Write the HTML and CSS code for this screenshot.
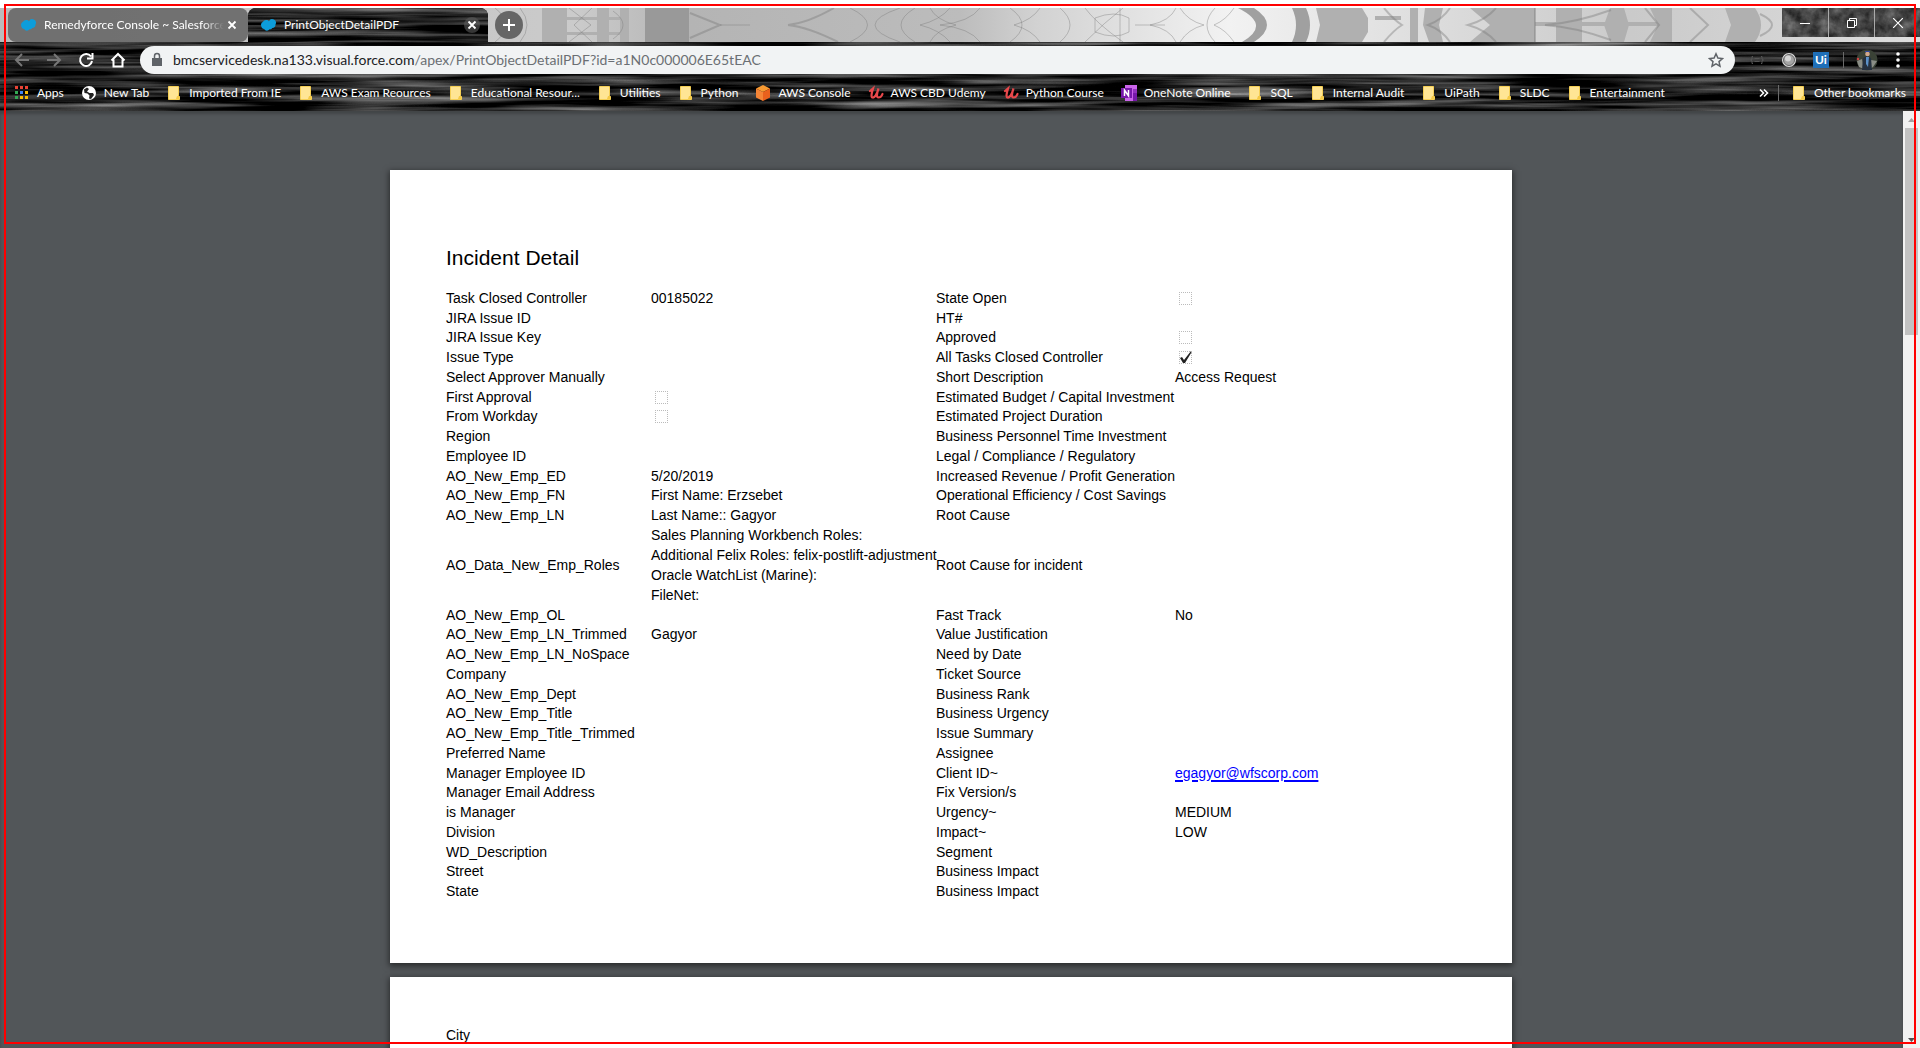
FILE: index.html
```html
<!DOCTYPE html>
<html lang="en">
<head>
<meta charset="utf-8">
<title>PrintObjectDetailPDF</title>
<link rel="stylesheet" href="styles.css">
</head>
<body>
<svg class="defs" width="0" height="0" aria-hidden="true">
  <defs>
    <symbol id="cloud" viewBox="0 0 16 16"><path fill="#0d9dda" d="M1 8a3.500 3.500 0 0 1 2-3.300A3.500 3.500 0 0 1 6.600 3c1 0 1.800.5 2.400 1.200A3.600 3.600 0 0 1 15.500 7.500 3.200 3.200 0 0 1 12.300 11c-.5 1-1.500 1.500-2.800 1.300A3 3 0 0 1 4.200 12C2.500 12 1.300 10.800 1 8z"/></symbol>
    <symbol id="folder" viewBox="0 0 16 16"><path fill="#ffe594" stroke="#f5cf55" d="M2.500 1.500h10v9l1 1v3h-11z"/><path fill="#f5c945" d="M11 11h2v3h-3z"/></symbol>
    <symbol id="udemy" viewBox="0 0 16 16"><path fill="none" stroke="#e8484b" stroke-width="2.200" stroke-linecap="round" d="M2 6l3-2.500C4 7 2.500 12 4.500 12.500S9 9 10.500 3.500C9 8 8 12.500 10.500 12.500S14 10.500 14.500 9"/></symbol>
    <symbol id="close" viewBox="0 0 16 16"><path stroke="currentColor" stroke-width="1.800" d="M4.500 4.500l7 7M11.500 4.500l-7 7"/></symbol>
    <filter id="wood-grain" x="0" y="0" width="100%" height="100%" color-interpolation-filters="sRGB">
      <feTurbulence type="fractalNoise" baseFrequency="0.006 0.17" numOctaves="3" seed="8"/>
      <feColorMatrix values="1 0 0 0 -.36  1 0 0 0 -.36  1 0 0 0 -.36  0 0 0 0 1"/>
    </filter>
    <filter id="stone" x="0" y="0" width="100%" height="100%" color-interpolation-filters="sRGB">
      <feTurbulence type="fractalNoise" baseFrequency="0.08" numOctaves="4" seed="3"/>
      <feColorMatrix values=".5 0 0 0 .02  .5 0 0 0 .02  .5 0 0 0 .02  0 0 0 0 1"/>
    </filter>
  </defs>
</svg>

<header class="chrome">
  <svg class="wood" aria-hidden="true"><rect width="100%" height="100%" filter="url(#wood-grain)"/></svg>
  <div class="strip">
    <svg class="forest" viewBox="0 0 1920 34" preserveAspectRatio="none" aria-hidden="true">
      <defs>
        <linearGradient id="sky"><stop offset="0" stop-color="#bbb"/><stop offset=".3" stop-color="#cbcbcb"/><stop offset=".36" stop-color="#b4b4b4"/><stop offset=".5" stop-color="#bcbcbc"/><stop offset=".54" stop-color="#d2d2d2"/><stop offset=".64" stop-color="#f2f2f2"/><stop offset=".75" stop-color="#dcdcdc"/><stop offset=".85" stop-color="#cacaca"/><stop offset="1" stop-color="#ddd"/></linearGradient>
      </defs>
      <path fill="url(#sky)" d="M0 0h1920v34H0z"/>
      <g fill="#b0b0b0">
        <path d="M542 0h25v34h-25zM597 0h12v34h-12zM620 0h9v34h-9zM567 9h60v3h-60zM567 24h60v3h-60z"/>
        <path fill="#999" d="M645 0h44v34h-44z"/>
        <path d="M1316 0h46l6 10v14l-6 10h-46l4-17zM1410 0h8v34h-8zM1375 8h26v4h-26zM1425 0h18l-4 17 4 17h-14l-6-17zM1470 0h65v34h-65l20-17zM1535 14h130v4h-130zM1556 0h26v34h-26zM1610 0h14l5 17-5 17h-14l-6-17zM1650 0h22v34h-22l8-17zM1725 0h30q12 17 0 34h-30l6-17z"/>
        <path fill="#a0a0a0" d="M1238 0h16q26 17 0 34h-12q30-17-4-34zM1292 0h14q8 17 0 34h-14q8-17 0-34z"/>
      </g>
      <g fill="none" stroke="#777" stroke-opacity=".4">
        <path d="M495 0q22 17 0 34M520 0q14 17 0 34M569 0l22 17-22 17M592 0l-18 17 18 17M613 3q20 14 0 28"/>
        <path stroke-width="2" d="M690 5l30 12-30 13M788 17q20-2 46-17M788 17q20 2 50 17"/>
        <path d="M720 17h30M850 34q35-17 0-34M900 0q-50 17 0 34M915 0q-28 17 0 34M930 0q6 12 26 17-20 5-26 17M950 0q-10 12-30 17 20 5 30 17M980 0q-10 14-40 17 30 3 40 17M1010 0q24 17 0 34M1040 0q-8 12-26 17 18 5 26 17M1060 0q20 17 0 34"/>
        <path d="M1085 0q10 14 38 34M1123 0q-18 14-38 34M1095 10q20-8 34 0v14q-14 8-34 0zM1120 0v34M1150 17q20-4 26-17M1150 17q20 4 26 17M1135 17h30M1180 0q8 13 24 17-16 4-24 17M1215 0q-16 17 0 34M1234 0q-8 12-20 17 12 5 20 17"/>
        <path stroke-width="2" d="M1384 0q10 12 18 17-8 5-18 17M1450 0q-8 12-22 17 14 5 22 17M1496 0q-10 12-28 17 18 5 28 17M1545 17q30-2 66-15M1545 17q30 2 66 15M1645 0l14 17-14 17M1690 0l18 17-18 17M1760 6q24 11 0 22M1535 0v34"/>
      </g>
    </svg>
    <nav class="tabs" aria-label="Tabs">
      <div class="tab">
        <svg class="ico"><use href="#cloud"/></svg>
        <span class="tab-title fade">Remedyforce Console ~ Salesforce</span>
        <button class="tab-close" aria-label="Close tab"><svg class="ico"><use href="#close"/></svg></button>
      </div>
      <div class="tab active">
        <svg class="wood" aria-hidden="true"><rect width="100%" height="100%" filter="url(#wood-grain)"/></svg>
        <svg class="ico"><use href="#cloud"/></svg>
        <span class="tab-title">PrintObjectDetailPDF</span>
        <button class="tab-close" aria-label="Close tab"><svg class="ico"><use href="#close"/></svg></button>
      </div>
      <button class="new-tab" aria-label="New tab"><svg width="14" height="14" viewBox="0 0 14 14"><path stroke="#fff" stroke-width="2" d="M7 1v12M1 7h12"/></svg></button>
    </nav>
    <div class="window-buttons">
      <svg class="wood" aria-hidden="true"><rect width="100%" height="100%" filter="url(#stone)"/></svg>
      <button aria-label="Minimize"><svg width="10" height="10"><path stroke="#fff" d="M0 5.500h10"/></svg></button>
      <button aria-label="Restore"><svg width="10" height="10" fill="none" stroke="#fff"><path d="M.5 2.500h7v7h-7zM2.500 2.500v-2h7v7h-2"/></svg></button>
      <button aria-label="Close"><svg width="10" height="10"><path stroke="#fff" stroke-width="1.200" d="M0 0l10 10M10 0L0 10"/></svg></button>
    </div>
  </div>

  <div class="toolbar">
    <button class="nav dim" aria-label="Back"><svg width="16" height="16" viewBox="0 0 16 16"><path d="M15 8H2M8 2L2 8l6 6"/></svg></button>
    <button class="nav dim" aria-label="Forward"><svg width="16" height="16" viewBox="0 0 16 16"><path d="M1 8h13M8 2l6 6-6 6"/></svg></button>
    <button class="nav" aria-label="Reload"><svg width="16" height="16" viewBox="0 0 16 16"><path d="M13 4.500A6 6 0 1 0 14 9M14.500 1v5.500H9"/></svg></button>
    <button class="nav" aria-label="Home"><svg width="16" height="16" viewBox="0 0 16 16"><path d="M1.500 8.500L8 2l6.500 6.500M3.500 7.500v7h9v-7"/></svg></button>
    <div class="omnibox">
      <svg width="12" height="16" viewBox="0 0 12 16"><path fill="#5f6368" d="M1 6h10v8H1z"/><path fill="none" stroke="#5f6368" stroke-width="1.500" d="M3.500 6V4a2.500 2.500 0 0 1 5 0v2"/></svg>
      <span class="url">bmcservicedesk.na133.visual.force.com<span class="path">/apex/PrintObjectDetailPDF?id=a1N0c000006E65tEAC</span></span>
      <button class="star" aria-label="Bookmark this page"><svg width="16" height="16" viewBox="0 0 16 16"><path fill="none" stroke="#5f6368" stroke-width="1.500" d="M8 1.800l1.900 4.300 4.600.4-3.500 3.100 1 4.600L8 11.800l-4 2.400 1-4.600L1.500 6.500l4.600-.4z"/></svg></button>
    </div>
    <div class="extensions">
      <button class="ext" aria-label="JSON"><svg class="ico" viewBox="0 0 16 16"><path fill="none" stroke="#555" d="M4 4.500H3v2.500L1.500 8 3 9v2.500h1M12 4.500h1v2.500l1.500 1-1.500 1v2.500h-1M5.500 6.500h5M5.500 9.500h5"/></svg></button>
      <button class="ext" aria-label="Recorder"><svg class="ico" viewBox="0 0 16 16"><circle cx="8" cy="8" r="7" fill="#ddd"/><circle cx="8" cy="8" r="5.500" fill="#a5a5a5" stroke="#666"/><circle cx="7" cy="6.500" r="3" fill="#d5d5d5"/></svg></button>
      <button class="ext" aria-label="UiPath"><span class="uipath">Ui</span></button>
      <span class="divider"></span>
      <button aria-label="Profile"><svg width="22" height="22" viewBox="0 0 22 22"><circle cx="11" cy="11" r="10.500" fill="#3a4236"/><path fill="#8a8d86" d="M1 12l5-2 2 10-5-2zM15 11l6 1-4 6-3 2z"/><path fill="#25303f" d="M7 9l4-2 4 2 1 12H6z"/><path fill="#5b90c8" d="M10 8h3l-1 10-2-3z"/><circle cx="11.500" cy="5" r="2.300" fill="#d2a98c"/><path fill="#2e48a0" d="M9 2h5v1H9z"/><circle cx="2" cy="10" r="1.200" fill="#c44"/></svg></button>
      <button class="menu" aria-label="Menu"><svg width="4" height="16" fill="#fff"><circle cx="2" cy="2" r="1.800"/><circle cx="2" cy="8" r="1.800"/><circle cx="2" cy="14" r="1.800"/></svg></button>
    </div>
  </div>

  <nav class="bookmarks" aria-label="Bookmarks">
    <a href="#"><svg class="ico" viewBox="0 0 16 16"><path fill="#ea4335" d="M1 1h3v3H1zM6 1h3v3H6zM11 1h3v3h-3z"/><path fill="#34a853" d="M1 6h3v3H1zM1 11h3v3H1z"/><path fill="#4285f4" d="M6 6h3v3H6z"/><path fill="#fbbc05" d="M11 6h3v3h-3zM6 11h3v3H6zM11 11h3v3h-3z"/></svg>Apps</a>
    <a href="#"><svg class="ico" viewBox="0 0 16 16"><circle cx="8" cy="8" r="7" fill="#fff"/><path fill="#222" d="M3 4.500l3-2 2 1.500-2 2.500 2.500 1.500H12l1 2-3 4-2-.5.500-3-2-2-3-.5z"/></svg>New Tab</a>
    <a href="#"><svg class="ico"><use href="#folder"/></svg>Imported From IE</a>
    <a href="#"><svg class="ico"><use href="#folder"/></svg>AWS Exam Reources</a>
    <a href="#"><svg class="ico"><use href="#folder"/></svg>Educational Resour...</a>
    <a href="#"><svg class="ico"><use href="#folder"/></svg>Utilities</a>
    <a href="#"><svg class="ico"><use href="#folder"/></svg>Python</a>
    <a href="#"><svg class="ico" viewBox="0 0 16 16"><path fill="#f79a32" d="M8 0l7 3.500L8 7 1 3.500z"/><path fill="#f58536" d="M1 3.500L8 7v9l-7-3.500z"/><path fill="#e9611d" d="M15 3.500L8 7v9l7-3.500z"/></svg>AWS Console</a>
    <a href="#"><svg class="ico"><use href="#udemy"/></svg>AWS CBD Udemy</a>
    <a href="#"><svg class="ico"><use href="#udemy"/></svg>Python Course</a>
    <a href="#"><svg class="ico" viewBox="0 0 16 16"><path fill="#ca64ea" d="M4 0h12v16H4z"/><path fill="#9332bf" d="M12 4h4v4h-4z"/><path fill="#7719aa" d="M12 8h4v8h-4zM0 3h11v10H0z"/><path fill="none" stroke="#fff" stroke-width="1.500" d="M3.500 11V5.200l4 5.600V5"/></svg>OneNote Online</a>
    <a href="#"><svg class="ico"><use href="#folder"/></svg>SQL</a>
    <a href="#"><svg class="ico"><use href="#folder"/></svg>Internal Audit</a>
    <a href="#"><svg class="ico"><use href="#folder"/></svg>UiPath</a>
    <a href="#"><svg class="ico"><use href="#folder"/></svg>SLDC</a>
    <a href="#"><svg class="ico"><use href="#folder"/></svg>Entertainment</a>
    <button class="overflow" aria-label="More bookmarks"><svg width="10" height="10" viewBox="0 0 10 10"><path fill="none" stroke="#fff" stroke-width="1.600" d="M1 1.500L4.500 5 1 8.500M5 1.500L8.500 5 5 8.500"/></svg></button>
    <span class="divider"></span>
    <a href="#" class="other"><svg class="ico"><use href="#folder"/></svg>Other bookmarks</a>
  </nav>
</header>

<div class="viewer">
  <main class="pages">
    <section class="sheet">
      <h1>Incident Detail</h1>
      <table>
        <colgroup><col class="c-label"><col class="c-value"><col class="c-label2"><col></colgroup>
        <tbody>
        <tr><th>Task Closed Controller</th><td>00185022</td><th>State Open</th><td><input type="checkbox" aria-label="State Open"></td></tr>
        <tr><th>JIRA Issue ID</th><td></td><th>HT#</th><td></td></tr>
        <tr><th>JIRA Issue Key</th><td></td><th>Approved</th><td><input type="checkbox" aria-label="Approved"></td></tr>
        <tr><th>Issue Type</th><td></td><th>All Tasks Closed Controller</th><td><input type="checkbox" checked aria-label="All Tasks Closed Controller"></td></tr>
        <tr><th>Select Approver Manually</th><td></td><th>Short Description</th><td>Access Request</td></tr>
        <tr><th>First Approval</th><td><input type="checkbox" aria-label="First Approval"></td><th>Estimated Budget / Capital Investment</th><td></td></tr>
        <tr><th>From Workday</th><td><input type="checkbox" aria-label="From Workday"></td><th>Estimated Project Duration</th><td></td></tr>
        <tr><th>Region</th><td></td><th>Business Personnel Time Investment</th><td></td></tr>
        <tr><th>Employee ID</th><td></td><th>Legal / Compliance / Regulatory</th><td></td></tr>
        <tr><th>AO_New_Emp_ED</th><td>5/20/2019</td><th>Increased Revenue / Profit Generation</th><td></td></tr>
        <tr><th>AO_New_Emp_FN</th><td>First Name: Erzsebet</td><th>Operational Efficiency / Cost Savings</th><td></td></tr>
        <tr><th>AO_New_Emp_LN</th><td>Last Name:: Gagyor</td><th>Root Cause</th><td></td></tr>
        <tr><th>AO_Data_New_Emp_Roles</th><td>Sales Planning Workbench Roles:<br>Additional Felix Roles: felix-postlift-adjustment<br>Oracle WatchList (Marine):<br>FileNet:</td><th>Root Cause for incident</th><td></td></tr>
        <tr><th>AO_New_Emp_OL</th><td></td><th>Fast Track</th><td>No</td></tr>
        <tr><th>AO_New_Emp_LN_Trimmed</th><td>Gagyor</td><th>Value Justification</th><td></td></tr>
        <tr><th>AO_New_Emp_LN_NoSpace</th><td></td><th>Need by Date</th><td></td></tr>
        <tr><th>Company</th><td></td><th>Ticket Source</th><td></td></tr>
        <tr><th>AO_New_Emp_Dept</th><td></td><th>Business Rank</th><td></td></tr>
        <tr><th>AO_New_Emp_Title</th><td></td><th>Business Urgency</th><td></td></tr>
        <tr><th>AO_New_Emp_Title_Trimmed</th><td></td><th>Issue Summary</th><td></td></tr>
        <tr><th>Preferred Name</th><td></td><th>Assignee</th><td></td></tr>
        <tr><th>Manager Employee ID</th><td></td><th>Client ID~</th><td><a href="mailto:egagyor@wfscorp.com">egagyor@wfscorp.com</a></td></tr>
        <tr><th>Manager Email Address</th><td></td><th>Fix Version/s</th><td></td></tr>
        <tr><th>is Manager</th><td></td><th>Urgency~</th><td>MEDIUM</td></tr>
        <tr><th>Division</th><td></td><th>Impact~</th><td>LOW</td></tr>
        <tr><th>WD_Description</th><td></td><th>Segment</th><td></td></tr>
        <tr><th>Street</th><td></td><th>Business Impact</th><td></td></tr>
        <tr><th>State</th><td></td><th>Business Impact</th><td></td></tr>
        </tbody>
      </table>
    </section>
    <section class="sheet next">
      <table><tbody><tr><th>City</th></tr></tbody></table>
    </section>
  </main>
  <div class="scrollbar" aria-hidden="true">
    <span class="arrow up"></span>
    <span class="thumb"></span>
    <span class="arrow down"></span>
  </div>
</div>
<div class="frame" aria-hidden="true"></div>
</body>
</html>
```
FILE: styles.css
```css
* { box-sizing: border-box; }

body {
  margin: 0;
  height: 100vh;
  padding-top: 8px;
  display: flex;
  flex-direction: column;
  overflow: hidden;
  background: #fff;
  color: #000;
  font: 14px/20px "Liberation Sans", Arial, sans-serif;
}

button {
  margin: 0;
  padding: 0;
  border: 0;
  background: none;
  color: #fff;
  font: inherit;
  display: flex;
  align-items: center;
  justify-content: center;
}

svg { display: block; flex: none; }
.defs { position: absolute; }
.ico { width: 16px; height: 16px; }
.divider { width: 1px; height: 16px; background: #6a6a6a; }

/* Browser chrome */
.chrome {
  position: relative;
  flex: none;
  background: #000;
  color: #fff;
  font: 12px/16px Lato, "Open Sans", sans-serif;
  isolation: isolate;
}

.wood, .forest {
  position: absolute;
  inset: 0;
  width: 100%;
  height: 100%;
  z-index: -1;
}

.strip {
  position: relative;
  isolation: isolate;
  display: flex;
  justify-content: space-between;
  height: 34px;
}

.tabs { display: flex; padding-left: 8px; }

.tab {
  position: relative;
  isolation: isolate;
  overflow: hidden;
  width: 240px;
  display: flex;
  align-items: center;
  padding: 0 8px 0 12px;
  border-radius: 8px;
  background: rgba(95, 95, 95, .82);
}
.tab.active { border-radius: 8px 8px 0 0; background: #000; }
.tab-title {
  flex: 1;
  margin-left: 8px;
  overflow: hidden;
  white-space: nowrap;
}
.fade {
  -webkit-mask-image: linear-gradient(90deg, #000 88%, transparent);
  mask-image: linear-gradient(90deg, #000 88%, transparent);
}
.tab-close { width: 16px; height: 16px; border-radius: 50%; }
.active .tab-close { background: rgba(90, 90, 90, .6); }

.new-tab {
  align-self: center;
  width: 28px;
  height: 28px;
  margin-left: 7px;
  border-radius: 50%;
  background: #666;
}

.window-buttons {
  position: relative;
  isolation: isolate;
  display: flex;
  height: 29px;
}
.window-buttons button { width: 46px; border-left: 1px solid #aaa; }
.window-buttons button:first-of-type { border-left: 0; }

.toolbar { display: flex; align-items: center; height: 36px; padding: 4px 14px 4px 8px; }
.nav { width: 28px; height: 28px; margin-right: 4px; }
.nav svg { fill: none; stroke: #fff; stroke-width: 2; }
.nav.dim svg { stroke: #777; }

.omnibox {
  flex: 1;
  display: flex;
  align-items: center;
  height: 28px;
  margin-left: 4px;
  padding: 0 11px;
  border-radius: 14px;
  background: #f1f3f4;
  color: #202124;
  font-size: 14px;
}
.url { flex: 1; margin-left: 10px; }
.path { color: #6b6f73; }

.extensions { display: flex; align-items: center; gap: 12px; padding-left: 12px; }
.ext { width: 20px; }
.uipath { width: 16px; height: 16px; background: #1f6fb8; font-weight: 700; }
.menu { width: 16px; }

.bookmarks { display: flex; align-items: center; height: 33px; padding: 0 14px 4px; }
.bookmarks a {
  display: flex;
  align-items: center;
  gap: 7px;
  margin-right: 17px;
  color: #fff;
  text-decoration: none;
  white-space: nowrap;
}
.bookmarks .overflow { margin-left: auto; margin-right: 9px; }
.bookmarks .other { margin: 0 0 0 12px; }

/* Document viewer */
.viewer { flex: 1; min-height: 0; display: flex; background: #525659; }
.pages {
  flex: 1;
  overflow: hidden;
  padding: 59px 1px 0 0;
  box-shadow: inset 0 3px 3px rgba(0, 0, 0, .2);
}

.sheet {
  width: 1122px;
  min-height: 793px;
  margin: 0 auto 14px;
  padding: 76px 56px 56px;
  background: #fff;
  box-shadow: 0 2px 6px 1px rgba(0, 0, 0, .5);
}
.sheet.next { padding-top: 48px; }

h1 { margin: 0 0 18px; font-size: 21px; line-height: 24px; font-weight: 400; }

table { width: 100%; border-collapse: collapse; table-layout: fixed; }
.c-label { width: 205px; }
.c-value { width: 285px; }
.c-label2 { width: 239px; }
th, td {
  height: 20px;
  padding: 0;
  text-align: left;
  font-weight: 400;
  white-space: nowrap;
  vertical-align: middle;
}
tr:nth-child(4n+3) > * { height: 19px; line-height: 19px; }

td a { color: #00f; text-decoration-thickness: 2px; text-underline-offset: 2px; }

input[type="checkbox"] {
  appearance: none;
  display: block;
  width: 13px;
  height: 13px;
  margin: 0 0 0 4px;
  border: 1px dotted #bbb;
  background: #fff;
}
input[type="checkbox"]:checked {
  background: url("data:image/svg+xml,%3Csvg xmlns='http://www.w3.org/2000/svg' viewBox='0 0 13 13'%3E%3Cpath fill='%23222' d='M1 7l2-1 2 3L12 0l1 .5L6 12H4z'/%3E%3C/svg%3E") center / 13px border-box no-repeat;
}

.scrollbar {
  flex: none;
  width: 17px;
  display: flex;
  flex-direction: column;
  align-items: center;
  background: #f1f1f1;
}
.arrow { width: 7px; height: 4px; background: #a3a3a3; clip-path: polygon(50% 0, 100% 100%, 0 100%); }
.arrow.up { margin: 7px 0 6px; }
.arrow.down { margin: auto 0 6px; background: #505050; clip-path: polygon(0 0, 100% 0, 50% 100%); }
.thumb { width: 13px; height: 207px; background: #c1c1c1; }

/* Highlight drawn round the whole window */
.frame { position: fixed; inset: 4px; border: 2px solid #f00; pointer-events: none; }
```
